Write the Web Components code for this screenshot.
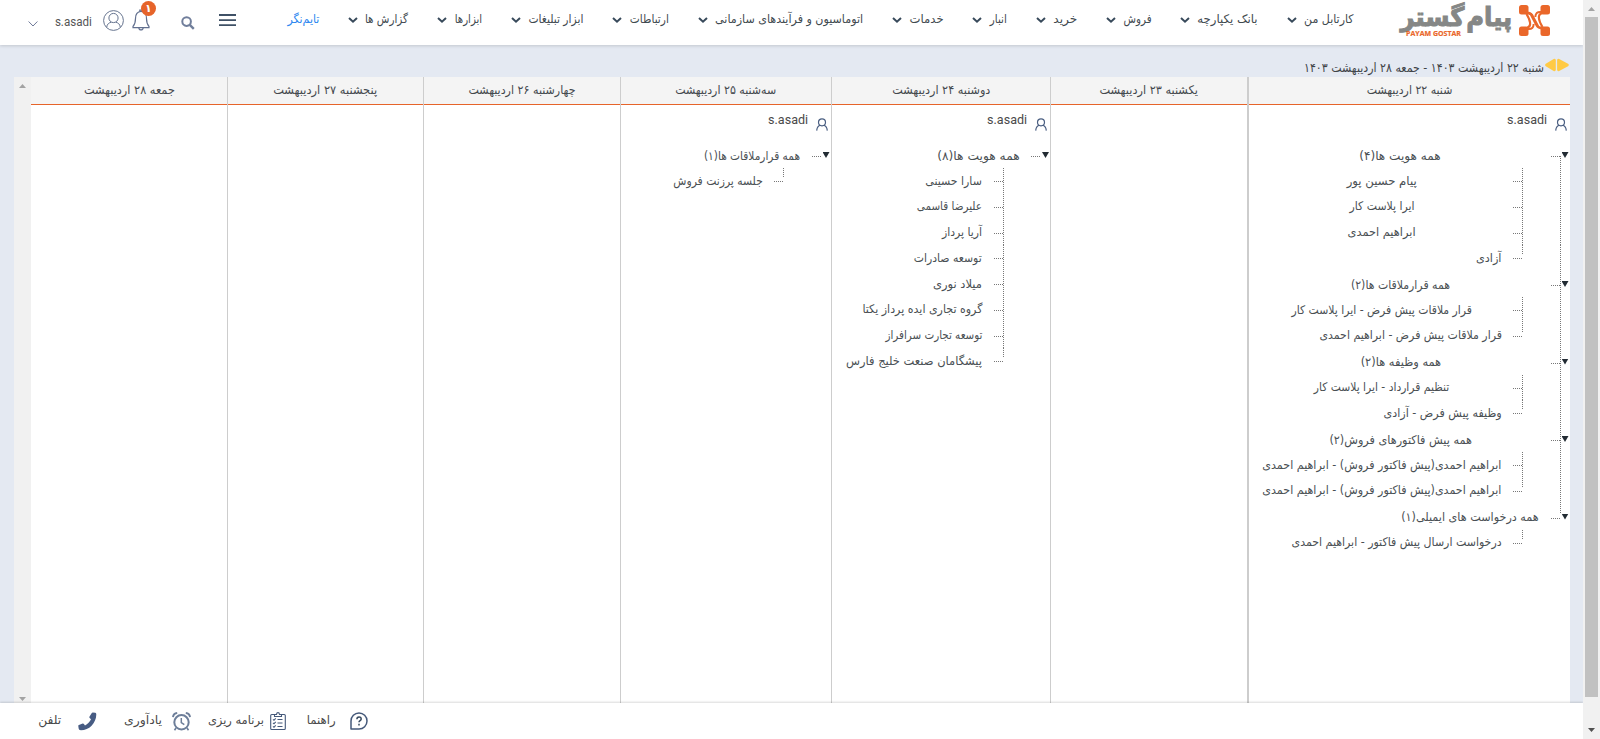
<!DOCTYPE html>
<html lang="fa">
<head>
<meta charset="utf-8">
<title>تایم‌نگر</title>
<style>
html,body{margin:0;height:100%;overflow:hidden;background:#e4e9f2}
body{font:12px/18px "DejaVu Sans Condensed","DejaVu Sans",sans-serif;font-stretch:condensed;color:#44494e}
</style>
</head>
<body>
<crm-app></crm-app>
<script>
const define = (name, css, html, after) => customElements.define(name, class extends HTMLElement {
  connectedCallback() {
    if (this.shadowRoot) return;
    const root = this.attachShadow({mode: 'open'});
    root.innerHTML = `<style>*{box-sizing:border-box}${css}</style>${typeof html === 'function' ? html(this) : html}`;
    if (after) after(this, root);
  }
});

/* One line of text, stretched horizontally to the width in its "w" attribute. */
define('fit-text', `
:host{display:block;flex:none;direction:rtl;white-space:nowrap;overflow:visible}
span{display:inline-block;transform-origin:100% 50%;white-space:nowrap}
`, '<span><slot></slot></span>', (host, root) => {
  const w = +host.getAttribute('w'), s = root.querySelector('span');
  host.style.width = w + 'px';
  s.style.transform = `scaleX(${w / s.getBoundingClientRect().width})`;
});

const ICONS = {
  chevron: [10, 6, '<path d="M1 1l4 3.7L9 1" fill="none" stroke="#37495a" stroke-width="2"/>'],
  thin: [10, 6, '<path d="M.6.5L5 5 9.400 .5" fill="none" stroke="#6f7a99" stroke-width="1"/>'],
  menu: [17, 12, '<path d="M0 1h17M0 6.200h17M0 11.200h17" stroke="#3f5166" stroke-width="1.800"/>'],
  search: [14, 14, '<circle cx="5.600" cy="5.600" r="4.300" fill="none" stroke="#707e9b" stroke-width="2"/><path d="M8.800 8.800l4 4" stroke="#707e9b" stroke-width="2.400"/>'],
  bell: [18, 22, '<path d="M1 17.500c1.800-2 2.500-3.500 2.500-8C3.500 5 5.500 2.500 9 2.500S14.500 5 14.500 9.500c0 4.500.7 6 2.500 8v1.200H1zM7.800 2.500V1.200h2.400v1.300M6.800 18.700c.2 3 4.200 3 4.400 0" fill="none" stroke="#62708f" stroke-width="1.200"/>'],
  avatar: [21, 21, '<g fill="none" stroke="#66748f" stroke-width="1"><circle cx="10.500" cy="10.500" r="9.900"/><circle cx="10.500" cy="8" r="4.600"/><path d="M3.700 17.300c.3-3.400 2.500-4.600 4.500-5.100M17.300 17.300c-.3-3.400-2.500-4.600-4.500-5.100"/></g>'],
  person: [12, 13, '<g fill="none" stroke="#4b5f82" stroke-width="1.200"><circle cx="6" cy="4.300" r="3.500"/><path d="M.7 12.600c.3-3.200 1.500-4.600 3.300-5.300M11.300 12.600c-.3-3.200-1.500-4.600-3.300-5.300"/></g>'],
  help: [18, 18, '<path d="M1 17V9a8 8 0 1 1 8 8z" fill="none" stroke="#45597a" stroke-width="1.500" stroke-linejoin="round"/><path d="M6.900 7.200c0-3 4.300-3 4.300-.2 0 1.700-2.200 1.500-2.200 3.300M9 11.800v1.800" fill="none" stroke="#37495f" stroke-width="1.500"/>'],
  clipboard: [16, 18, '<g fill="none" stroke="#45597a" stroke-width="1.100"><path d="M4.500 2.500H1.700Q.7 2.500.7 3.500v13q0 1 1 1h12.600q1 0 1-1v-13q0-1-1-1h-2.800"/><path d="M4.500 4.500v-2h2C6.700 0 9.300 0 9.500 2.500h2v2z"/><path d="M7.500 7.500h5M7.500 11h5M7.500 14.500h5M3 7.300l1 1 1.700-2M3 10.800l1 1 1.700-2M3 14.300l1 1 1.700-2"/></g>'],
  alarm: [19, 19, '<g fill="none" stroke="#6d7e99"><circle cx="9.500" cy="10.300" r="7.200" stroke-width="2"/><path d="M9.300 6v4.700l3 2" stroke-width="1.500"/><path d="M1 5.200Q1.300 1.500 5.200 1M18 5.200Q17.700 1.500 13.800 1" stroke-width="1.900"/><path d="M4 16l-1.500 2.300M15 16l1.500 2.300" stroke-width="1.600"/></g>'],
  phone: [19, 19, '<path d="M13.800.9q.3-.5.900-.5l2.600.3q1 .2 1 1.700C18.200 11 11 18.300 3 18.300 1.300 18.300.8 17.500.6 16.300L.3 13.900q-.1-.8.600-1L4.700 11.500q.8-.2 1.200.4l1.100 1.600c2.600-1.400 5-3.900 6-6.300L11.700 6q-.6-.5-.3-1.200z" fill="#475c83"/>'],
  arrowL: [11, 12, '<path d="M9.400 1.200v9.600L1.500 6z" fill="#ffca45" stroke="#ffca45" stroke-width="2.800" stroke-linejoin="round"/>'],
  arrowR: [12, 12, '<path d="M1.500 1.200v9.600L10.400 6z" fill="#ffca45" stroke="#ffca45" stroke-width="2.800" stroke-linejoin="round"/>'],
  mark: [31, 31, '<g fill="#ea672a"><rect width="9.500" height="9.500" rx="2.500"/><rect x="21.500" width="9.500" height="9.500" rx="2.500"/><rect y="21.500" width="9.500" height="9.500" rx="2.500"/><rect x="21.500" y="21.500" width="9.500" height="9.500" rx="2.500"/></g><g fill="none" stroke="#ea672a"><path stroke-width="2.600" d="M8 8.300c3-.8 4.500.6 6 3.700l5.500 10.500M23 22.700c-3 .8-4.500-.6-6-3.700L11.500 8.500"/><path stroke-width="2.200" d="M8 22.700c3-.7 3.300-2.500 3.100-4.700-.2-2.500-.8-4.500-3.600-9M23 8.300c-3 .7-3.300 2.500-3.100 4.700.2 2.500.8 4.500 3.600 9"/><path stroke-width="2" d="M8.500 24c4.500.6 6-1.500 6.200-5M22.500 7c-4.500-.6-6 1.500-6.200 5"/></g>']
};
define('ui-icon', ':host{display:block;flex:none}svg{display:block;overflow:visible}', h => {
  const [w, ht, d] = ICONS[h.getAttribute('name')];
  return `<svg width="${w}" height="${ht}" viewBox="0 0 ${w} ${ht}">${d}</svg>`;
});

define('brand-logo', `
:host{display:flex;direction:rtl;width:151px;height:45px;margin-right:33px;flex:none;position:relative;color:#858786}
ui-icon{margin:5px 0 0 7px}
fit-text{font:bold 26px/34px "DejaVu Sans",sans-serif;-webkit-text-stroke:1px #858786;margin-top:0}
.g{margin-right:2px}
.en{position:absolute;left:7px;top:29px;font:bold 7.500px/9px "Open Sans",sans-serif;color:#ea672a;-webkit-text-stroke:.2px #ea672a;margin:0;direction:ltr}
.en::part(x){}
`, `<ui-icon name="mark"></ui-icon><fit-text w="46">پیام</fit-text><fit-text class="g" w="64">گستر</fit-text><fit-text class="en" w="55"><bdi>PAYAM GOSTAR</bdi></fit-text>`, (h, r) => {
  /* The Latin line is wider than its box before scaling: anchor it on the left. */
  const s = r.querySelector('.en').shadowRoot.querySelector('span');
  r.querySelector('.en').style.direction = 'ltr';
  s.style.transformOrigin = '0 50%';
});

define('menu-item', `
:host{display:flex;flex:none;color:#3f4a50;margin:10px 0 0 29px}
:host([active]){color:#2d87f0;margin-left:0}
.c{width:17.300px;padding:7px 7.300px 0 0}
`, h => `<fit-text w="${h.getAttribute('w')}"><slot></slot></fit-text>${h.hasAttribute('active') ? '' : '<div class="c"><ui-icon name="chevron"></ui-icon></div>'}`);

const MENU = [['کارتابل من',49.5],['بانک یکپارچه',60.3],['فروش',28],['خرید',24],['انبار',17],['خدمات',34],['اتوماسیون و فرآیندهای سازمانی',148],['ارتباطات',39],['ابزار تبلیغات',55],['ابزارها',27.5],['گزارش ها',43]];
define('top-bar', `
:host{display:flex;direction:rtl;align-items:flex-start;height:45px;background:#fff;box-shadow:0 1px 3px rgba(0,0,0,.15);position:relative}
nav{display:flex;margin-right:45.500px}
.b{position:relative;margin:9px 31px 0 0}
.n{position:absolute;left:9px;top:-8px;width:15px;height:15px;border-radius:50%;background:#e6642a;color:#fff;font:bold 11px/15px "DejaVu Sans",sans-serif;text-align:center}
fit-text.u{font:12.500px/18px Roboto,sans-serif;color:#555;margin:13px 11px 0 0}
`, `<brand-logo></brand-logo><nav>${MENU.map(([t, w]) => `<menu-item w="${w}">${t}</menu-item>`).join('')}<menu-item w="32" active>تایم‌نگر</menu-item></nav>
<ui-icon name="menu" style="margin:14px 51px 0 0"></ui-icon>
<ui-icon name="search" style="margin:16px 24px 0 0"></ui-icon>
<div class="b"><ui-icon name="bell"></ui-icon><div class="n">۱</div></div>
<ui-icon name="avatar" style="margin:10px 8px 0 0"></ui-icon>
<fit-text class="u" w="37">s.asadi</fit-text>
<ui-icon name="thin" style="margin:21px 17px 0 0"></ui-icon>`);

define('range-title', `
:host{display:flex;direction:rtl;height:32px;padding:14px 14px 0 0;color:#3f4448}
ui-icon{margin-left:1px}fit-text{margin-top:0;font-size:12.500px}
`, `<ui-icon name="arrowR"></ui-icon><ui-icon name="arrowL" style="margin:0 0 0 1px"></ui-icon><fit-text w="240">شنبه ۲۲ اردیبهشت ۱۴۰۳ - جمعه ۲۸ اردیبهشت ۱۴۰۳</fit-text>`);

define('scroll-strip', `
:host{display:flex;flex-direction:column;align-items:center;justify-content:space-between;width:17px;flex:none;background:#f1f1f1}
i{width:7px;height:4px;background:#a3a3a3}
.u{clip-path:polygon(50% 0,100% 100%,0 100%);margin-top:7px}
.d{clip-path:polygon(0 0,100% 0,50% 100%);margin-bottom:2px}
.t{width:13px;flex:1;background:#c1c1c1;margin:6px 0 31px}
:host([thumb]) .d{margin-bottom:7px;background:#505050}
`, h => `<i class="u"></i>${h.hasAttribute('thumb') ? '<div class="t"></div>' : ''}<i class="d"></i>`);

/* A tree row: "r" is the distance of the label from the column's right edge. */
define('tree-row', `
:host{display:flex;direction:rtl;position:relative;height:25.750px;padding-top:3.500px;color:#4a5054}
:host([group]){height:26px;padding-top:4.500px}
.h{position:absolute;right:48px;top:13px;width:9px;height:1px;background:repeating-linear-gradient(90deg,#777 0 1px,transparent 1px 2px)}
.v{position:absolute;right:47px;top:0;bottom:0;width:1px;background:repeating-linear-gradient(#777 0 1px,transparent 1px 2px)}
:host([last]) .v{bottom:auto;height:9px}
:host([near]) .v{right:46px}
:host([near]) .h{right:47px}
:host([group]) .h{right:10px;top:14px}
.m{position:absolute;right:9px;top:0;bottom:0;width:1px;background:repeating-linear-gradient(#777 0 1px,transparent 1px 2px)}
:host([main=first]) .m{top:14px}
:host([main=end]) .m{bottom:auto;height:9px}
.t{position:absolute;right:1.500px;top:10px;width:7px;height:6px;background:#222b33;clip-path:polygon(0 0,100% 0,50% 100%)}
:host([near]) .t{right:1px}
`, h => `${h.hasAttribute('main') ? '<div class="m"></div>' : ''}<div class="h"></div><div class="${h.hasAttribute('group') ? 't' : 'v'}"></div><fit-text w="${h.getAttribute('w')}" style="margin-right:${h.getAttribute('r')}px"><slot></slot></fit-text>`);

define('day-column', `
:host{display:flex;flex-direction:column;flex:none;border-left:1px solid #cdcdcd;background:#fff}
header{height:28px;flex:none;background:#f4f4f4;border-bottom:1px solid #e6642a;display:flex;justify-content:center;padding-top:3.500px}
.user{display:flex;direction:rtl;height:37px;padding-right:3px}
.user ui-icon{margin-top:13px}
.user fit-text{font:13.500px/18px Roboto,sans-serif;margin:5px 7.500px 0 0;color:#4a4a4a}
`, h => `<header><fit-text w="${h.getAttribute('w')}">${h.getAttribute('day')}</fit-text></header>${h.children.length ? '<div class="user"><ui-icon name="person"></ui-icon><fit-text w="40">s.asadi</fit-text></div>' : ''}<slot></slot>`);

/* Rows are [label, label width, right offset, flags]. */
const DAYS = [
  ['شنبه ۲۲ اردیبهشت', 85.5, 323, [
    ['همه هویت ها(۴)',81.5,129,'group main=first'],['پیام حسین پور',70,153.5,'main'],['ایرا پلاست کار',65,155.5,'main'],['ابراهیم احمدی',68,154.5,'main'],['آزادی',25.5,69,'main last'],
    ['همه قرارملاقات ها(۲)',99,120.5,'group main'],['قرار ملاقات پیش فرض - ایرا پلاست کار',180.5,98.5,'main'],['قرار ملاقات پیش فرض - ابراهیم احمدی',182.5,68.5,'main last'],
    ['همه وظیفه ها(۲)',80.5,129,'group main'],['تنظیم قرارداد - ایرا پلاست کار',135.5,121,'main'],['وظیفه پیش فرض - آزادی',118,68.5,'main last'],
    ['همه پیش فاکتورهای فروش(۲)',142.5,98.5,'group main'],['ابراهیم احمدی(پیش فاکتور فروش) - ابراهیم احمدی',239,68.5,'main'],['ابراهیم احمدی(پیش فاکتور فروش) - ابراهیم احمدی',239,68.5,'main last'],
    ['همه درخواست های ایمیلی(۱)',137.5,31,'group main=end'],['درخواست ارسال پیش فاکتور - ابراهیم احمدی',210,68.5,'last']]],
  ['یکشنبه ۲۳ اردیبهشت', 98.5, 197, []],
  ['دوشنبه ۲۴ اردیبهشت', 98, 219, [
    ['همه هویت ها(۸)',82.5,30,'group near'],['سارا حسینی',56.5,68,'near'],['علیرضا قاسمی',65,68,'near'],['آریا پرداز',40,68,'near'],['توسعه صادرات',68,68,'near'],['میلاد نوری',49,68,'near'],['گروه تجاری ایده پرداز یکتا',120,68,'near'],['توسعه تجارت سرافراز',97,68,'near'],['پیشگامان صنعت خلیج فارس',136,68,'near last']]],
  ['سه‌شنبه ۲۵ اردیبهشت', 101, 211, [['همه قرارملاقات ها(۱)',96,31,'group'],['جلسه پرزنت فروش',89.5,68,'last']]],
  ['چهارشنبه ۲۶ اردیبهشت', 107, 197, []],
  ['پنجشنبه ۲۷ اردیبهشت', 104, 196, []],
  ['جمعه ۲۸ اردیبهشت', 91, 196, []]
];
define('week-board', `
:host{display:flex;flex:1;min-height:0;padding:0 13px 0 14px}
.days{display:flex;direction:rtl;flex:1}
day-column:first-child{border-left-width:2px}
day-column:last-child{border-left:0}
`, `<scroll-strip></scroll-strip><div class="days">${DAYS.map(([d, w, cw, rows]) => `<day-column day="${d}" w="${w}" style="width:${cw}px">${rows.map(([t, tw, r, f]) => `<tree-row w="${tw}" r="${r}" ${f}>${t}</tree-row>`).join('')}</day-column>`).join('')}</div>`);

define('tool-bar', `
:host{display:flex;align-items:flex-start;height:36px;flex:none;background:#fff;padding-left:38.500px;box-shadow:0 -1px 2px rgba(0,0,0,.15);position:relative;color:#4a4a4a}
ui-icon{margin-top:9px}fit-text{margin-top:8px}
`, `<fit-text w="23">تلفن</fit-text><ui-icon name="phone" style="margin-left:16px"></ui-icon>
<fit-text w="38" style="margin-left:27.500px">یادآوری</fit-text><ui-icon name="alarm" style="margin-left:10px"></ui-icon>
<fit-text w="56" style="margin-left:17px">برنامه ریزی</fit-text><ui-icon name="clipboard" style="margin-left:6px"></ui-icon>
<fit-text w="29" style="margin-left:21px">راهنما</fit-text><ui-icon name="help" style="margin-left:14px"></ui-icon>`);

define('crm-app', `
:host{display:flex;height:739px;width:1600px;background:#e4e9f2}
main{width:1583px;display:flex;flex-direction:column;flex:none;overflow:hidden}
top-bar{flex:none}range-title{flex:none}
`, `<main><top-bar></top-bar><range-title></range-title><week-board></week-board><tool-bar></tool-bar></main><scroll-strip thumb></scroll-strip>`);
</script>
</body>
</html>
